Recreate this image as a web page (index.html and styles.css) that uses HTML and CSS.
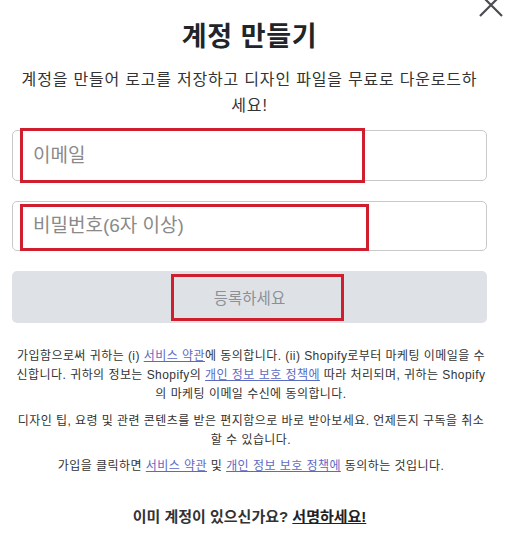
FILE: index.html
```html
<!DOCTYPE html>
<html lang="ko">
<head>
    <meta charset="UTF-8">
    <meta name="viewport" content="width=device-width, initial-scale=1.0">
    <title>계정 만들기</title>
    <link rel="stylesheet" href="styles.css">
</head>
<body>
    <!-- Signup Modal -->
    <div class="modal">
        <button class="close-btn" type="button" aria-label="닫기">
            <svg width="26" height="26" viewBox="0 0 26 26">
                <path d="M2 2 L24 24 M24 2 L2 24" stroke="#4a4d52" stroke-width="2.2" fill="none"/>
            </svg>
        </button>

        <h1 class="title">계정 만들기</h1>
        <p class="subtitle">계정을 만들어 로고를 저장하고 디자인 파일을 무료로 다운로드하세요!</p>

        <form class="signup-form">
            <div class="field">
                <input type="email" class="text-input input-email" placeholder="이메일">
                <span class="mark mark-email"></span>
            </div>
            <div class="field">
                <input type="password" class="text-input input-password" placeholder="비밀번호(6자 이상)">
                <span class="mark mark-password"></span>
            </div>
            <div class="field">
                <button type="submit" class="submit-btn" disabled>등록하세요</button>
                <span class="mark mark-submit"></span>
            </div>
        </form>

        <!-- Legal -->
        <div class="legal">
            <p>가입함으로써 귀하는 (i) <a href="#">서비스 약관</a>에 동의합니다. (ii) Shopify로부터 마케팅 이메일을 수신합니다. 귀하의 정보는 Shopify의 <a href="#">개인 정보 보호 정책에</a> 따라 처리되며, 귀하는 Shopify의 마케팅 이메일 수신에 동의합니다.</p>
            <p class="legal-tips">디자인 팁, 요령 및 관련 콘텐츠를 받은 편지함으로 바로 받아보세요. 언제든지 구독을 취소할 수 있습니다.</p>
            <p class="legal-click">가입을 클릭하면 <a href="#">서비스 약관</a> 및 <a href="#">개인 정보 보호 정책에</a> 동의하는 것입니다.</p>
        </div>

        <p class="login">이미 계정이 있으신가요? <a href="#">서명하세요!</a></p>
    </div>
</body>
</html>
```

FILE: styles.css
```css
/* General Styling */
body {
    font-family: 'Liberation Sans', 'Noto Sans CJK KR', sans-serif;
    margin: 0;
    padding: 0;
    background-color: #fff;
    color: #333;
}

.modal {
    position: relative;
    width: 475px;
    margin-left: 12px;
    padding-top: 19px;
}

.close-btn {
    position: absolute;
    top: -8px;
    right: -17px;
    padding: 0;
    border: none;
    background: none;
    cursor: pointer;
}

.close-btn svg {
    display: block;
}

/* Heading */
.title {
    margin: 0;
    font-size: 27px;
    line-height: 36px;
    letter-spacing: 0.6px;
    font-weight: bold;
    color: #212529;
    text-align: center;
}

.subtitle {
    margin: 12px 0 0;
    padding: 0 4px;
    font-size: 16px;
    line-height: 26px;
    letter-spacing: 0.8px;
    color: #333;
    text-align: center;
}

/* Form */
.signup-form {
    margin-top: 11px;
    display: flex;
    flex-direction: column;
    gap: 20px;
}

.field {
    position: relative;
}

.text-input {
    display: block;
    width: 100%;
    box-sizing: border-box;
    height: 51px;
    padding: 0 20px;
    border: 1px solid #c9c9c9;
    border-radius: 5px;
    font-family: inherit;
    font-size: 19px;
    color: #333;
    outline: none;
}

.text-input::placeholder {
    color: #8a8a8a;
}

.input-password {
    height: 50px;
}

.submit-btn {
    display: block;
    width: 100%;
    height: 52px;
    border: none;
    border-radius: 5px;
    background-color: #dee2e6;
    color: #8b9096;
    font-family: inherit;
    font-size: 15.5px;
}

/* Red highlight marks */
.mark {
    position: absolute;
    box-sizing: border-box;
    border: 3px solid #cf1f2e;
    pointer-events: none;
}

.mark-email {
    left: 8px;
    top: -2px;
    width: 345px;
    height: 55px;
}

.mark-password {
    left: 8px;
    top: 3px;
    width: 349px;
    height: 47px;
}

.mark-submit {
    left: 159px;
    top: 3px;
    width: 173px;
    height: 47px;
}

/* Legal text */
.legal {
    margin: 24px -3px 0 0;
    text-align: center;
    font-size: 12px;
    line-height: 19px;
    letter-spacing: 0.45px;
    color: #333;
}

.legal p {
    margin: 0;
}

.legal .legal-tips {
    margin-top: 8px;
}

.legal .legal-click {
    margin-top: 7px;
}

.legal a {
    color: #5c6ac4;
    text-decoration: underline;
}

.login {
    margin: 31px 0 0;
    text-align: center;
    font-size: 15px;
    line-height: 20px;
    font-weight: bold;
    color: #333;
}

.login a {
    color: #222;
    text-decoration: underline;
}
```
